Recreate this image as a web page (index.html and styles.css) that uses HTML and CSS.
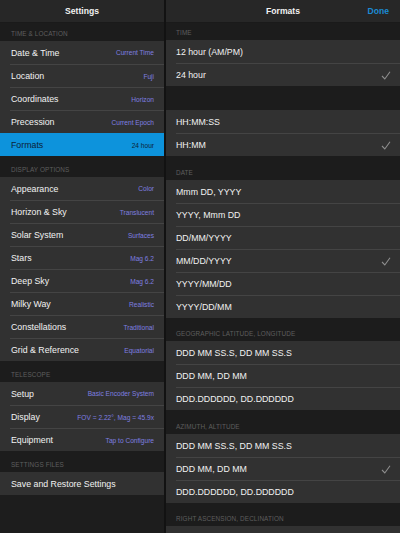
FILE: index.html
```html
<!DOCTYPE html>
<html lang="en">
<head>
    <meta charset="UTF-8">
    <title>Settings - Formats</title>
    <link rel="stylesheet" href="styles.css">
</head>
<body>
    <div class="split">
        <div class="master">
            <div class="navbar"><span class="title">Settings</span></div>

            <div class="section first"><span>Time &amp; Location</span></div>
            <div class="group">
                <div class="row"><div class="cell"><span class="label">Date &amp; Time</span><span class="detail">Current Time</span></div></div>
                <div class="row"><div class="cell"><span class="label">Location</span><span class="detail">Fuji</span></div></div>
                <div class="row"><div class="cell"><span class="label">Coordinates</span><span class="detail">Horizon</span></div></div>
                <div class="row"><div class="cell"><span class="label">Precession</span><span class="detail">Current Epoch</span></div></div>
                <div class="row selected"><div class="cell"><span class="label">Formats</span><span class="detail">24 hour</span></div></div>
            </div>

            <div class="section"><span>Display Options</span></div>
            <div class="group">
                <div class="row"><div class="cell"><span class="label">Appearance</span><span class="detail">Color</span></div></div>
                <div class="row"><div class="cell"><span class="label">Horizon &amp; Sky</span><span class="detail">Translucent</span></div></div>
                <div class="row"><div class="cell"><span class="label">Solar System</span><span class="detail">Surfaces</span></div></div>
                <div class="row"><div class="cell"><span class="label">Stars</span><span class="detail">Mag 6.2</span></div></div>
                <div class="row"><div class="cell"><span class="label">Deep Sky</span><span class="detail">Mag 6.2</span></div></div>
                <div class="row"><div class="cell"><span class="label">Milky Way</span><span class="detail">Realistic</span></div></div>
                <div class="row"><div class="cell"><span class="label">Constellations</span><span class="detail">Traditional</span></div></div>
                <div class="row"><div class="cell"><span class="label">Grid &amp; Reference</span><span class="detail">Equatorial</span></div></div>
            </div>

            <div class="section"><span>Telescope</span></div>
            <div class="group">
                <div class="row"><div class="cell"><span class="label">Setup</span><span class="detail">Basic Encoder System</span></div></div>
                <div class="row"><div class="cell"><span class="label">Display</span><span class="detail">FOV = 2.22°, Mag = 45.9x</span></div></div>
                <div class="row"><div class="cell"><span class="label">Equipment</span><span class="detail">Tap to Configure</span></div></div>
            </div>

            <div class="section"><span>Settings Files</span></div>
            <div class="group">
                <div class="row"><div class="cell"><span class="label">Save and Restore Settings</span></div></div>
            </div>
        </div>

        <div class="detail-pane">
            <div class="navbar">
                <span class="title">Formats</span>
                <span class="done">Done</span>
            </div>

            <div class="section first"><span>Time</span></div>
            <div class="group">
                <div class="row"><div class="cell"><span class="label">12 hour (AM/PM)</span></div></div>
                <div class="row"><div class="cell"><span class="label">24 hour</span><svg class="check" width="10" height="9" viewBox="0 0 10 9"><polyline points="1,5 3.8,8 9,0.8"/></svg></div></div>
            </div>

            <div class="section blank"></div>
            <div class="group">
                <div class="row"><div class="cell"><span class="label">HH:MM:SS</span></div></div>
                <div class="row"><div class="cell"><span class="label">HH:MM</span><svg class="check" width="10" height="9" viewBox="0 0 10 9"><polyline points="1,5 3.8,8 9,0.8"/></svg></div></div>
            </div>

            <div class="section tall"><span>Date</span></div>
            <div class="group">
                <div class="row"><div class="cell"><span class="label">Mmm DD, YYYY</span></div></div>
                <div class="row"><div class="cell"><span class="label">YYYY, Mmm DD</span></div></div>
                <div class="row"><div class="cell"><span class="label">DD/MM/YYYY</span></div></div>
                <div class="row"><div class="cell"><span class="label">MM/DD/YYYY</span><svg class="check" width="10" height="9" viewBox="0 0 10 9"><polyline points="1,5 3.8,8 9,0.8"/></svg></div></div>
                <div class="row"><div class="cell"><span class="label">YYYY/MM/DD</span></div></div>
                <div class="row"><div class="cell"><span class="label">YYYY/DD/MM</span></div></div>
            </div>

            <div class="section"><span>Geographic Latitude, Longitude</span></div>
            <div class="group">
                <div class="row"><div class="cell"><span class="label">DDD MM SS.S, DD MM SS.S</span></div></div>
                <div class="row"><div class="cell"><span class="label">DDD MM, DD MM</span></div></div>
                <div class="row"><div class="cell"><span class="label">DDD.DDDDDD, DD.DDDDDD</span></div></div>
            </div>

            <div class="section tall"><span>Azimuth, Altitude</span></div>
            <div class="group">
                <div class="row"><div class="cell"><span class="label">DDD MM SS.S, DD MM SS.S</span></div></div>
                <div class="row"><div class="cell"><span class="label">DDD MM, DD MM</span><svg class="check" width="10" height="9" viewBox="0 0 10 9"><polyline points="1,5 3.8,8 9,0.8"/></svg></div></div>
                <div class="row"><div class="cell"><span class="label">DDD.DDDDDD, DD.DDDDDD</span></div></div>
            </div>

            <div class="section"><span>Right Ascension, Declination</span></div>
            <div class="group">
                <div class="row"><div class="cell"></div></div>
            </div>
        </div>
    </div>
</body>
</html>
```

FILE: styles.css
```css
* {
    box-sizing: border-box;
}

html, body {
    margin: 0;
    height: 100%;
    background: #1d1d1d;
    overflow: hidden;
}

body {
    font-family: "Liberation Sans", Arial, sans-serif;
    color: #f0f0f0;
}

.split {
    display: grid;
    grid-template-columns: 166px 234px;
    height: 533px;
}

.master {
    background: #1d1d1d;
    border-right: 2px solid #121212;
    overflow: hidden;
}

.detail-pane {
    background: #1d1d1d;
    overflow: hidden;
}

.navbar {
    height: 23px;
    background: #272727;
    border-bottom: 1px solid #1a1a1a;
    display: flex;
    align-items: center;
    justify-content: center;
    position: relative;
}

.navbar .title {
    font-size: 8.6px;
    font-weight: bold;
    color: #f2f2f2;
}

.navbar .done {
    position: absolute;
    right: 11px;
    top: 6px;
    font-size: 8.6px;
    font-weight: bold;
    color: #1b8ad4;
}

.section {
    height: 21px;
    background: #1c1c1c;
    padding: 0 11px 4px;
    display: flex;
    align-items: flex-end;
    font-size: 6.4px;
    text-transform: uppercase;
    color: #5e5e5e;
    letter-spacing: 0.1px;
}

.section.first {
    height: 18px;
}

.section.tall,
.section.blank {
    height: 24px;
}

.detail-pane .section {
    height: 23px;
    padding-left: 10px;
}

.detail-pane .section.first {
    height: 17px;
}

.detail-pane .section.tall,
.detail-pane .section.blank {
    height: 24px;
}

.detail-pane .section:last-of-type {
    height: 20px;
}

.group {
    background: #313131;
}

.row {
    padding-left: 10px;
}

.cell {
    height: 23px;
    display: flex;
    align-items: center;
    justify-content: space-between;
    padding: 0 10px 0 1px;
    border-top: 1px solid #444444;
}

.row:first-child .cell {
    border-top: none;
}

.label {
    font-size: 8.8px;
    color: #f2f2f2;
}

.detail {
    font-size: 6.6px;
    color: #7f7fe0;
}

.row.selected {
    background: #0d93dc;
}

.row.selected .cell {
    border-top-color: #0d93dc;
}

.row.selected .label,
.row.selected .detail {
    color: #0c2236;
}

.detail-pane .cell {
    padding: 0 9px 0 0;
}

.check {
    fill: none;
    stroke: #8e8e8e;
    stroke-width: 1.1;
}
```
